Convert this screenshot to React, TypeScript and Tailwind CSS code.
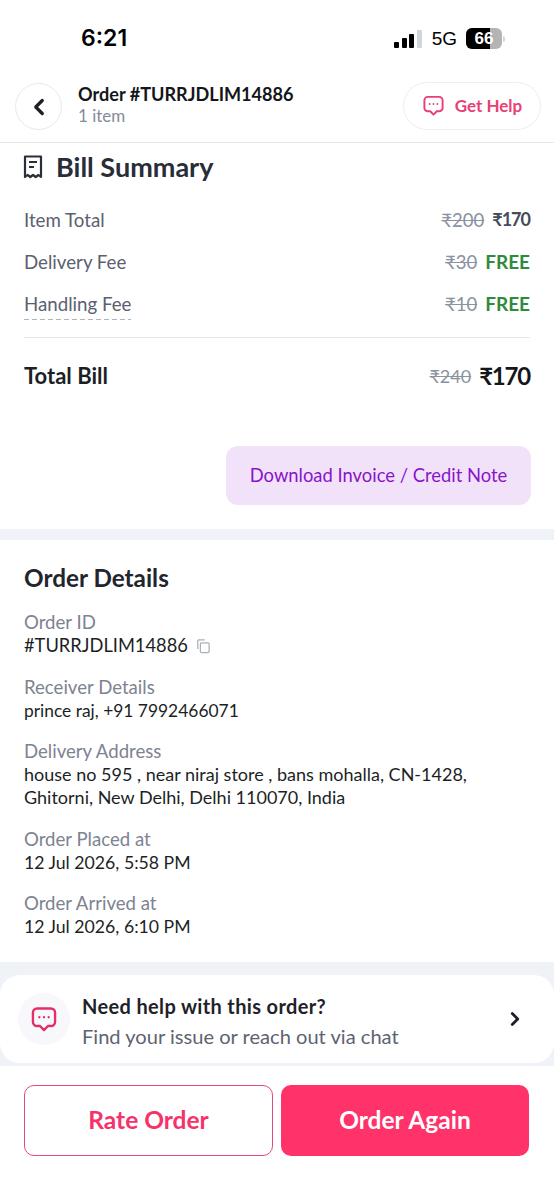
import { ChevronLeft, ChevronRight } from 'lucide-react';

const fees = [
  { label: 'Item Total', old: '₹200', price: '₹170', free: false, dashed: false },
  { label: 'Delivery Fee', old: '₹30', price: 'FREE', free: true, dashed: false },
  { label: 'Handling Fee', old: '₹10', price: 'FREE', free: true, dashed: true },
];

const details = [
  { label: 'Receiver Details', value: ['prince raj, +91 7992466071'], size: 'text-[17.4px]' },
  {
    label: 'Delivery Address',
    value: ['house no 595 , near niraj store , bans mohalla, CN-1428,', 'Ghitorni, New Delhi, Delhi 110070, India'],
    size: 'text-[18px]',
  },
  { label: 'Order Placed at', value: ['12 Jul 2026, 5:58 PM'], size: 'text-[17.7px]' },
  { label: 'Order Arrived at', value: ['12 Jul 2026, 6:10 PM'], size: 'text-[17.7px]' },
];

function ChatIcon({ className }: { className: string }) {
  return (
    <svg viewBox="0 0 24 24" fill="none" className={className}>
      <path
        d="M6 3h12a3.5 3.5 0 0 1 3.5 3.5v8A3.5 3.5 0 0 1 18 18h-2.6L12 21.5 8.6 18H6a3.5 3.5 0 0 1-3.5-3.5v-8A3.5 3.5 0 0 1 6 3Z"
        stroke="currentColor"
        strokeWidth="2"
        strokeLinejoin="round"
      />
      <circle cx="8" cy="10.5" r="1" fill="currentColor" />
      <circle cx="12" cy="10.5" r="1" fill="currentColor" />
      <circle cx="16" cy="10.5" r="1" fill="currentColor" />
    </svg>
  );
}

function StatusBar() {
  return (
    <div className="h-[75px] flex items-start justify-between pt-[24px] pl-[81px] pr-[49px]">
      <span className="text-[23px] leading-[29px] font-semibold text-black font-['Inter',sans-serif]">6:21</span>
      <div className="flex items-center mt-[4px]">
        <div className="flex items-end gap-[2.5px] h-[18px]">
          <div className="w-[5px] h-[6px] rounded-[1px] bg-black" />
          <div className="w-[5px] h-[10px] rounded-[1px] bg-black" />
          <div className="w-[5px] h-[14px] rounded-[1px] bg-black" />
          <div className="w-[5px] h-[18px] rounded-[1px] bg-gray-300" />
        </div>
        <span className="ml-[10px] text-[19px] leading-[20px] text-black font-['Liberation_Sans',sans-serif]">5G</span>
        <div className="ml-[9px] relative w-[36px] h-[21px] rounded-[6px] bg-[#b4b4b4] overflow-hidden">
          <div className="absolute left-0 top-0 bottom-0 w-[24px] bg-black" />
          <span className="absolute inset-0 flex items-center justify-center text-[17px] font-bold text-white font-['Liberation_Sans',sans-serif]">
            66
          </span>
        </div>
        <div className="ml-[1px] w-[2px] h-[6px] rounded-r-sm bg-gray-300" />
      </div>
    </div>
  );
}

function Header() {
  return (
    <div className="h-[68px] border-b border-[#e6e8ec] flex items-start justify-between pl-[15px] pr-[13px] pt-[7px]">
      <div className="flex items-start">
        <div className="w-[47px] h-[47px] mt-[1px] rounded-full border border-[#e8e9ed] flex items-center justify-center">
          <ChevronLeft size={26} strokeWidth={3} className="text-[#1c1f26]" />
        </div>
        <div className="ml-[16px]">
          <div className="text-[18.1px] leading-[24px] font-bold text-[#14161a]">Order #TURRJDLIM14886</div>
          <div className="text-[17px] leading-[20px] text-[#858b99]">1 item</div>
        </div>
      </div>
      <div className="w-[138px] h-[48px] pb-[1px] rounded-full border border-[#eeeef0] flex items-center justify-center gap-[10px]">
        <ChatIcon className="w-[23px] h-[23px] text-[#e93f77]" />
        <span className="text-[17px] font-bold text-[#e93f77]">Get Help</span>
      </div>
    </div>
  );
}

function BillSummary() {
  return (
    <section className="pl-[24px] pr-[24px] h-[386px] flex flex-col">
      <div className="flex items-center mt-[7px] -ml-[1px] h-[33px]">
        <svg viewBox="0 0 20 26" fill="none" className="w-[20px] h-[26px] text-[#2a2f3a]">
          <path
            d="M2 2.5h16v20.5l-2.6-2-2.7 2-2.7-2-2.7 2-2.7-2L2 23V2.5Z"
            stroke="currentColor"
            strokeWidth="2.2"
            strokeLinejoin="round"
          />
          <path d="M6 8h8M6 13h5" stroke="currentColor" strokeWidth="2.2" />
        </svg>
        <h2 className="ml-[13px] text-[27px] leading-[33px] font-bold text-[#282d38]">Bill Summary</h2>
      </div>
      <div className="mt-[26px] flex flex-col gap-[19px]">
        {fees.map((fee) => (
          <div key={fee.label} className="flex items-center justify-between h-[23px]">
            <div className="relative">
              <span className="text-[18.7px] leading-[23px] text-[#5a6070]">{fee.label}</span>
              {fee.dashed && (
                <div className="absolute left-0 right-0 top-[26px] h-[1px] bg-[repeating-linear-gradient(90deg,#aeb4c0_0_5px,transparent_5px_8px)]" />
              )}
            </div>
            <div className="flex items-center gap-[8px]">
              <span className="text-[18.5px] leading-[23px] text-[#8b92a0] line-through">{fee.old}</span>
              <span
                className={
                  fee.free
                    ? 'text-[19px] leading-[23px] -mt-[2px] font-bold text-[#2e8b3d]'
                    : 'text-[18px] tracking-[-1px] leading-[23px] -mt-[2px] font-bold text-[#454b59]'
                }
              >
                {fee.price}
              </span>
            </div>
          </div>
        ))}
      </div>
      <div className="mt-[21px] border-t border-[#e6e8ee]" />
      <div className="mt-[24px] flex items-center justify-between h-[27px]">
        <span className="text-[22px] leading-[27px] font-bold text-[#1c1f26]">Total Bill</span>
        <div className="flex items-center gap-[8px]">
          <span className="text-[18px] leading-[23px] text-[#8b92a0] line-through mt-[2px]">₹240</span>
          <span className="text-[24px] tracking-[-1.2px] leading-[27px] font-bold text-[#14161a]">₹170</span>
        </div>
      </div>
      <div className="mt-[57px] -mr-[1px] flex justify-end">
        <div className="w-[305px] h-[59px] rounded-[12px] bg-[#f1e2fa] flex items-center justify-center text-[18.4px] text-[#8a14c9]">
          Download Invoice / Credit Note
        </div>
      </div>
    </section>
  );
}

function OrderDetails() {
  return (
    <section className="px-[24px] pt-[23px] h-[422px]">
      <h2 className="text-[24.3px] leading-[29px] font-bold text-[#22252b]">Order Details</h2>
      <div className="mt-[19px] text-[18.6px] leading-[23px] text-[#7d8391]">Order ID</div>
      <div className="flex items-center text-[18.3px] leading-[23px] text-[#1c1f26]">
        #TURRJDLIM14886
        <svg viewBox="0 0 16 16" fill="none" className="ml-[8px] w-[14px] h-[16px] text-[#a9aeb8]">
          <rect x="5" y="4.5" width="10" height="11" rx="1.5" stroke="currentColor" strokeWidth="1.4" />
          <path d="M2 11.5V2.2C2 1.5 2.5 1 3.2 1H10" stroke="currentColor" strokeWidth="1.4" />
        </svg>
      </div>
      {details.map((row) => (
        <div key={row.label} className="mt-[18.5px]">
          <div className="text-[18.6px] leading-[23px] text-[#7d8391]">{row.label}</div>
          {row.value.map((line) => (
            <div key={line} className={`${row.size} leading-[23px] text-[#1c1f26]`}>
              {line}
            </div>
          ))}
        </div>
      ))}
    </section>
  );
}

function HelpCard() {
  return (
    <div className="bg-[#eff2f6] pt-[13px] pb-[3px]">
      <div className="h-[88px] rounded-[20px] bg-white flex items-center pl-[18px] pr-[28px]">
        <div className="w-[52px] h-[52px] rounded-full bg-[#f8f8fc] flex items-center justify-center">
          <ChatIcon className="w-[28px] h-[28px] text-[#e62e66]" />
        </div>
        <div className="ml-[12px] mt-[3px] flex-1">
          <div className="text-[20px] tracking-[0.35px] leading-[30px] font-bold text-[#1f2228]">
            Need help with this order?
          </div>
          <div className="text-[20.1px] leading-[30px] text-[#5d6370]">Find your issue or reach out via chat</div>
        </div>
        <ChevronRight size={22} strokeWidth={3} className="text-[#1c1f26]" />
      </div>
    </div>
  );
}

function Footer() {
  return (
    <div className="flex gap-[8px] pl-[24px] pt-[19px]">
      <button className="w-[249px] h-[71px] rounded-[10px] border border-[#e8497a] bg-white text-[24.5px] font-bold text-[#f5336a]">
        Rate Order
      </button>
      <button className="w-[248px] h-[71px] rounded-[10px] bg-[#ff3269] text-[24.5px] font-bold text-white">
        Order Again
      </button>
    </div>
  );
}

export default function App() {
  return (
    <div className="w-[554px] h-[1200px] bg-white overflow-hidden font-['Lato','Noto_Sans',sans-serif]">
      <StatusBar />
      <Header />
      <BillSummary />
      <div className="h-[11px] bg-[#eff2f6]" />
      <OrderDetails />
      <HelpCard />
      <Footer />
    </div>
  );
}
